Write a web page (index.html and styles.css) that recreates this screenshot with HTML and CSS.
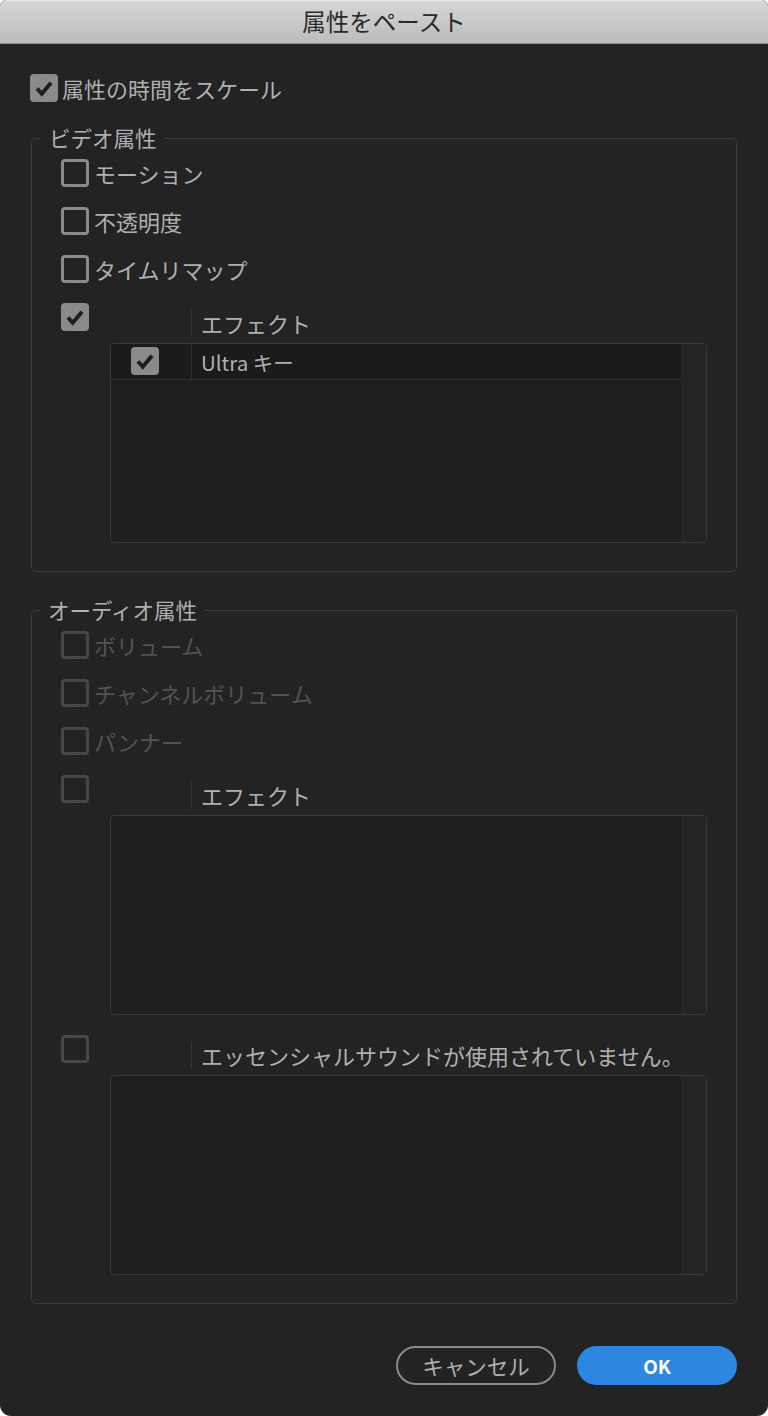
FILE: index.html
```html
<!DOCTYPE html>
<html lang="ja">
<head>
<meta charset="utf-8">
<title>属性をペースト</title>
<link rel="stylesheet" href="styles.css">
</head>
<body>
<div class="window">
  <div class="titlebar">属性をペースト</div>
  <div class="content">
    <label class="row top-row">
      <span class="cb checked"><svg viewBox="0 0 28 28"><path d="M7 14.5 L11.8 19.8 L21 8.8"/></svg></span>
      <span class="lbl">属性の時間をスケール</span>
    </label>

    <div class="group video">
      <div class="legend">ビデオ属性</div>
      <label class="row"><span class="cb"></span><span class="lbl">モーション</span></label>
      <label class="row"><span class="cb"></span><span class="lbl">不透明度</span></label>
      <label class="row"><span class="cb"></span><span class="lbl">タイムリマップ</span></label>
      <div class="fx">
        <span class="cb checked"><svg viewBox="0 0 28 28"><path d="M7 14.5 L11.8 19.8 L21 8.8"/></svg></span>
        <div class="fx-table">
          <div class="fx-head"><div class="c1"></div><div class="c2">エフェクト</div></div>
          <div class="list">
            <div class="rows">
              <div class="item">
                <div class="c1"><span class="cb checked"><svg viewBox="0 0 28 28"><path d="M7 14.5 L11.8 19.8 L21 8.8"/></svg></span></div>
                <div class="c2">Ultra キー</div>
              </div>
            </div>
            <div class="scroll"></div>
          </div>
        </div>
      </div>
    </div>

    <div class="group audio">
      <div class="legend">オーディオ属性</div>
      <label class="row disabled"><span class="cb"></span><span class="lbl">ボリューム</span></label>
      <label class="row disabled"><span class="cb"></span><span class="lbl">チャンネルボリューム</span></label>
      <label class="row disabled"><span class="cb"></span><span class="lbl">パンナー</span></label>
      <div class="fx disabled">
        <span class="cb"></span>
        <div class="fx-table">
          <div class="fx-head"><div class="c1"></div><div class="c2">エフェクト</div></div>
          <div class="list">
            <div class="rows"></div>
            <div class="scroll"></div>
          </div>
        </div>
      </div>
      <div class="fx disabled">
        <span class="cb"></span>
        <div class="fx-table">
          <div class="fx-head"><div class="c1"></div><div class="c2">エッセンシャルサウンドが使用されていません。</div></div>
          <div class="list">
            <div class="rows"></div>
            <div class="scroll"></div>
          </div>
        </div>
      </div>
    </div>

    <div class="buttons">
      <button class="btn cancel">キャンセル</button>
      <button class="btn ok">OK</button>
    </div>
  </div>
</div>
</body>
</html>
```

FILE: styles.css
```css
* { box-sizing: border-box; }
html, body { margin: 0; padding: 0; background: #ffffff; }
body {
  font-family: "Noto Sans CJK JP", "Noto Sans", sans-serif;
  width: 768px;
  height: 1416px;
}
.window {
  width: 768px;
  height: 1416px;
  background: #232323;
  border-radius: 6px 6px 11px 11px;
  overflow: hidden;
  color: #b0b0b0;
}
.titlebar {
  height: 44px;
  background: linear-gradient(#d6d6d6, #bcbcbc);
  border-top: 1px solid #e8e8e8;
  border-bottom: 1px solid #8e8e8e;
  color: #2a2a2a;
  font-size: 23.5px;
  line-height: 41px;
  text-align: center;
}
.content {
  padding: 30px 31px 0 30px;
}
.row {
  display: flex;
  align-items: center;
  height: 28px;
  gap: 5px;
  font-size: 22px;
  line-height: 28px;
}
.top-row { gap: 4px; }
.cb {
  flex: none;
  width: 28px;
  height: 28px;
  border: 3px solid #8a8a8a;
  border-radius: 4px;
  display: block;
}
.cb.checked {
  background: #8a8a8a;
  border: none;
}
.cb svg {
  display: block;
  width: 28px;
  height: 28px;
}
.cb svg path {
  fill: none;
  stroke: #1f1f1f;
  stroke-width: 4;
}
.group {
  position: relative;
  border: 1px solid #3a3a3a;
  border-radius: 5px;
  padding: 20px 29px 28px 29px;
  display: flex;
  flex-direction: column;
  gap: 20px;
  margin-left: 1px;
}
.video { margin-top: 36px; }
.audio { margin-top: 38px; }
.legend {
  position: absolute;
  top: -13px;
  left: 9px;
  padding: 0 8px;
  background: #232323;
  font-size: 21.5px;
  line-height: 24px;
  color: #b0b0b0;
}
.audio .legend { left: 8px; }
.row.disabled { color: #535353; }
.row.disabled .cb, .fx.disabled > .cb { border-color: #474747; }
.fx {
  display: flex;
  align-items: flex-start;
  height: 240px;
}
.fx-table {
  margin-left: 21px;
  width: 598px;
}
.fx-head {
  display: flex;
  margin-top: 6px;
  height: 27px;
  margin-bottom: 7px;
  font-size: 22px;
}
.fx-head .c1 { width: 81px; flex: none; }
.fx-head .c2 {
  border-left: 1px solid #383838;
  padding-left: 9px;
  line-height: 27px;
  white-space: nowrap;
  transform: translateY(1px);
}
.list {
  display: flex;
  height: 200px;
  border: 1px solid #3a3a3a;
  border-radius: 4px;
  background: #1e1e1e;
  overflow: hidden;
}
.rows { flex: 1; }
.scroll {
  width: 25px;
  flex: none;
  background: #242424;
}
.item {
  display: flex;
  height: 36px;
  background: #1b1b1b;
  border-bottom: 1px solid #303030;
}
.item .c1 {
  width: 80px;
  flex: none;
  padding-left: 20px;
  padding-top: 3px;
}
.item .c2 {
  border-left: 1px solid #303030;
  padding-left: 9px;
  font-size: 20.5px;
  line-height: 36px;
  color: #b0b0b0;
}
.buttons {
  display: flex;
  justify-content: flex-end;
  gap: 21px;
  margin-top: 42px;
}
.btn {
  width: 160px;
  height: 39px;
  border-radius: 20px;
  font-family: "Noto Sans CJK JP", "Noto Sans", sans-serif;
  padding: 0;
  cursor: pointer;
}
.cancel {
  background: transparent;
  border: 2px solid #8a8a8a;
  color: #b0b0b0;
  font-size: 21.5px;
}
.ok {
  background: #2d87e1;
  border: none;
  color: #ffffff;
  font-size: 19px;
  font-weight: 700;
}
```
